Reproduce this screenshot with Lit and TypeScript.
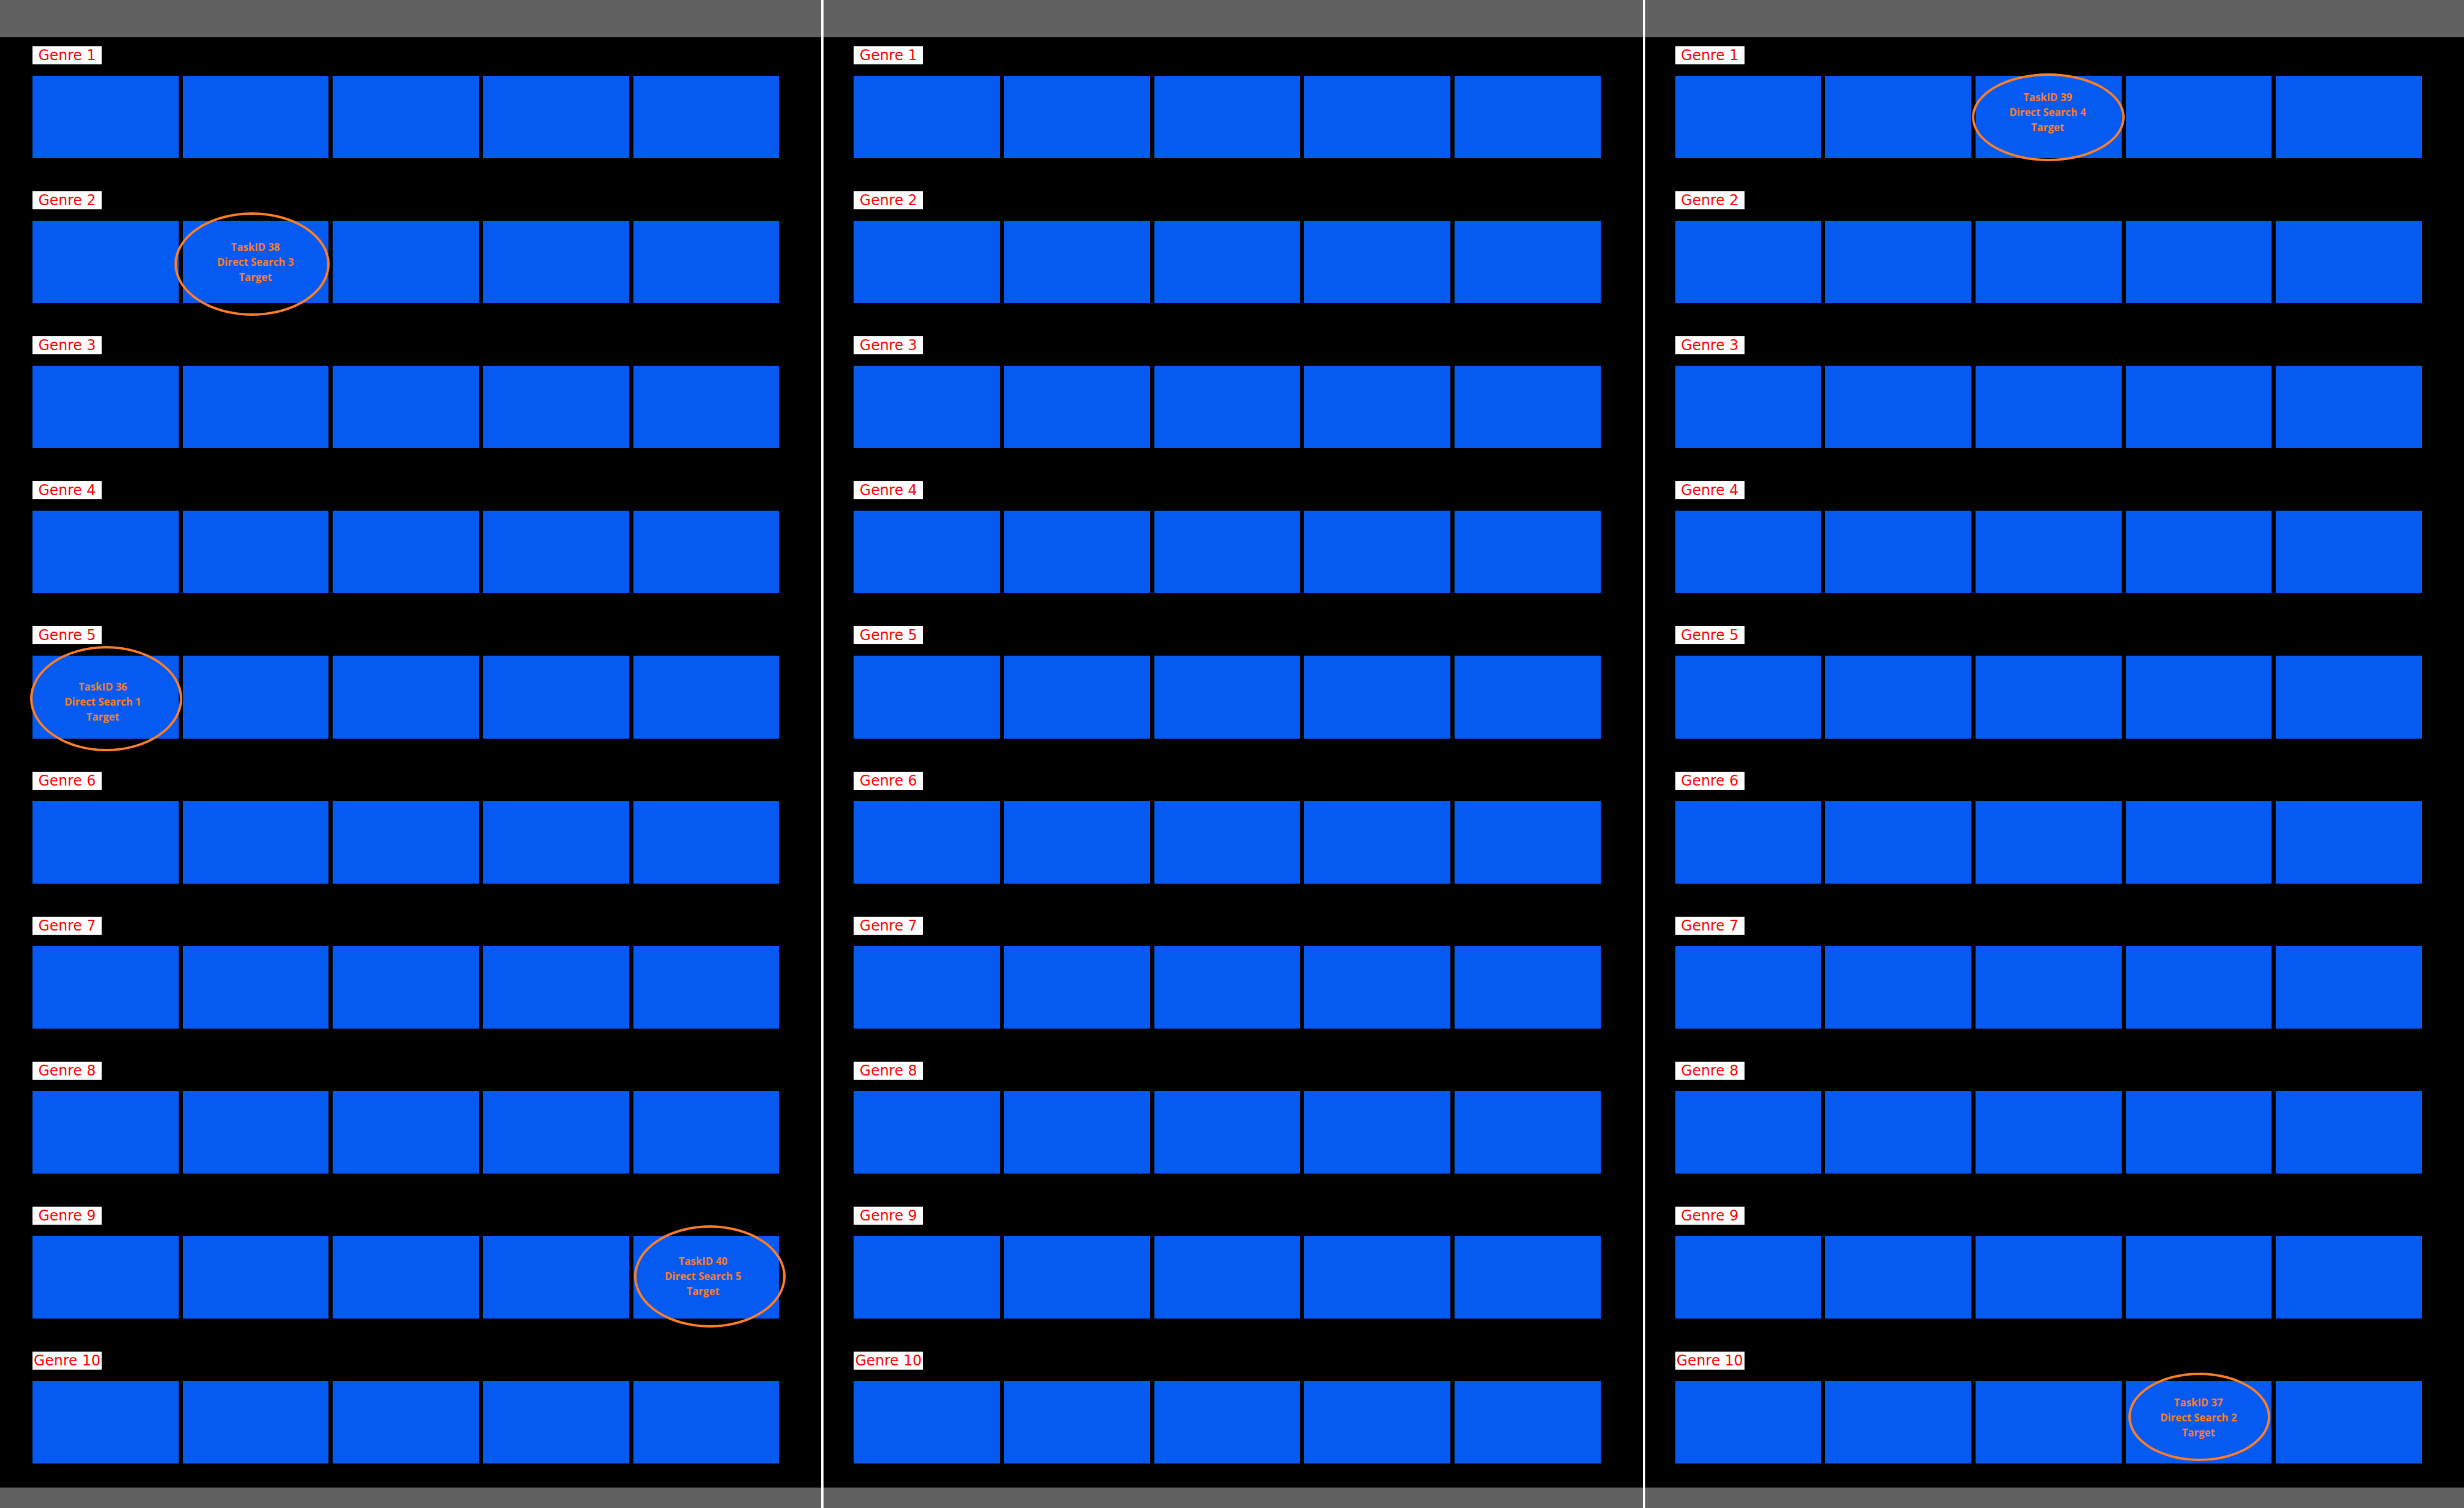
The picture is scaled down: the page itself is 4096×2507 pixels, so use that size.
import { LitElement, html, css, nothing } from "lit";
import { customElement, property } from "lit/decorators.js";
import { styleMap } from "lit/directives/style-map.js";

interface Target {
  screen: number;
  genre: number;
  tile: number;
  task: number;
  search: number;
  /** Ellipse box, relative to the tile: left, top, width, height. */
  ring: [number, number, number, number];
  /** Note box, relative to the tile: left, top. */
  note: [number, number];
}

const TARGETS: Target[] = [
  { screen: 0, genre: 2, tile: 1, task: 38, search: 3, ring: [-14, -14, 258, 172], note: [21, 31] },
  { screen: 0, genre: 5, tile: 0, task: 36, search: 1, ring: [-4, -16, 253, 175], note: [17, 39] },
  { screen: 0, genre: 9, tile: 4, task: 40, search: 5, ring: [1, -18, 252, 170], note: [16, 29] },
  { screen: 2, genre: 1, tile: 2, task: 39, search: 4, ring: [-6, -4, 254, 146], note: [20, 23] },
  { screen: 2, genre: 10, tile: 3, task: 37, search: 2, ring: [4, -14, 236, 147], note: [21, 23] },
];

const GENRES = Array.from({ length: 10 }, (_, i) => i + 1);
const TILES = [0, 1, 2, 3, 4];
const px = (n: number) => `${n}px`;

@customElement("target-mark")
export class TargetMark extends LitElement {
  @property({ attribute: false }) target!: Target;

  static styles = css`
    :host {
      display: block;
    }
    .ring {
      position: absolute;
      z-index: 1;
      box-sizing: border-box;
      border: 4px solid #ff7f27;
      border-radius: 50%;
    }
    .note {
      position: absolute;
      z-index: 1;
      width: 200px;
      margin: 0;
      font: 700 17px/25px "Open Sans", "Noto Sans", sans-serif;
      color: #ff7f27;
      text-align: center;
      white-space: nowrap;
    }
    .line {
      display: block;
    }
  `;

  render() {
    const { ring, note, task, search } = this.target;
    const [left, top, width, height] = ring;
    return html`
      <div
        class="ring"
        style=${styleMap({ left: px(left), top: px(top), width: px(width), height: px(height) })}
      ></div>
      <p class="note" style=${styleMap({ left: px(note[0]), top: px(note[1]) })}>
        <span class="line">TaskID ${task}</span>
        <span class="line">Direct Search ${search}</span>
        <span class="line">Target</span>
      </p>
    `;
  }
}

@customElement("genre-row")
export class GenreRow extends LitElement {
  @property({ type: Number }) genre = 1;
  @property({ attribute: false }) targets: Target[] = [];

  static styles = css`
    :host {
      display: flex;
      flex-direction: column;
      align-items: flex-start;
      gap: 19px;
      box-sizing: border-box;
      padding: 15px 0 40px;
    }
    .label {
      min-width: 115px;
      margin: 0;
      background: #fff;
      color: #f00;
      font: 400 24px/30px "DejaVu Sans", Verdana, sans-serif;
      text-align: center;
      white-space: nowrap;
    }
    .tiles {
      flex: 1;
      align-self: stretch;
      display: grid;
      grid-template-columns: repeat(5, minmax(0, 1fr));
      gap: 7px;
    }
    .tile {
      position: relative;
      background: #055af1;
    }
  `;

  render() {
    return html`
      <h2 class="label">Genre ${this.genre}</h2>
      <div class="tiles">
        ${TILES.map((i) => {
          const target = this.targets.find((t) => t.tile === i);
          return html`<div class="tile">
            ${target ? html`<target-mark .target=${target}></target-mark>` : nothing}
          </div>`;
        })}
      </div>
    `;
  }
}

@customElement("app-root")
export class AppRoot extends LitElement {
  static styles = css`
    :host {
      display: grid;
      grid-template-columns: repeat(3, minmax(0, 1fr));
      min-height: 100vh;
      background: #000;
    }
    .screen {
      display: flex;
      flex-direction: column;
      box-sizing: border-box;
    }
    .screen + .screen {
      border-left: 4px solid #fff;
    }
    .band {
      height: 62px;
      background: #616161;
    }
    .band.foot {
      height: 34px;
    }
    .rows {
      flex: 1;
      display: grid;
      grid-template-rows: repeat(10, 1fr);
      padding: 0 70px 0 54px;
    }
    .screen + .screen .rows {
      padding-left: 50px;
    }
  `;

  render() {
    return html`
      ${[0, 1, 2].map(
        (screen) => html`
          <section class="screen">
            <div class="band"></div>
            <div class="rows">
              ${GENRES.map(
                (genre) => html`<genre-row
                  .genre=${genre}
                  .targets=${TARGETS.filter((t) => t.screen === screen && t.genre === genre)}
                ></genre-row>`
              )}
            </div>
            <div class="band foot"></div>
          </section>
        `
      )}
    `;
  }
}
